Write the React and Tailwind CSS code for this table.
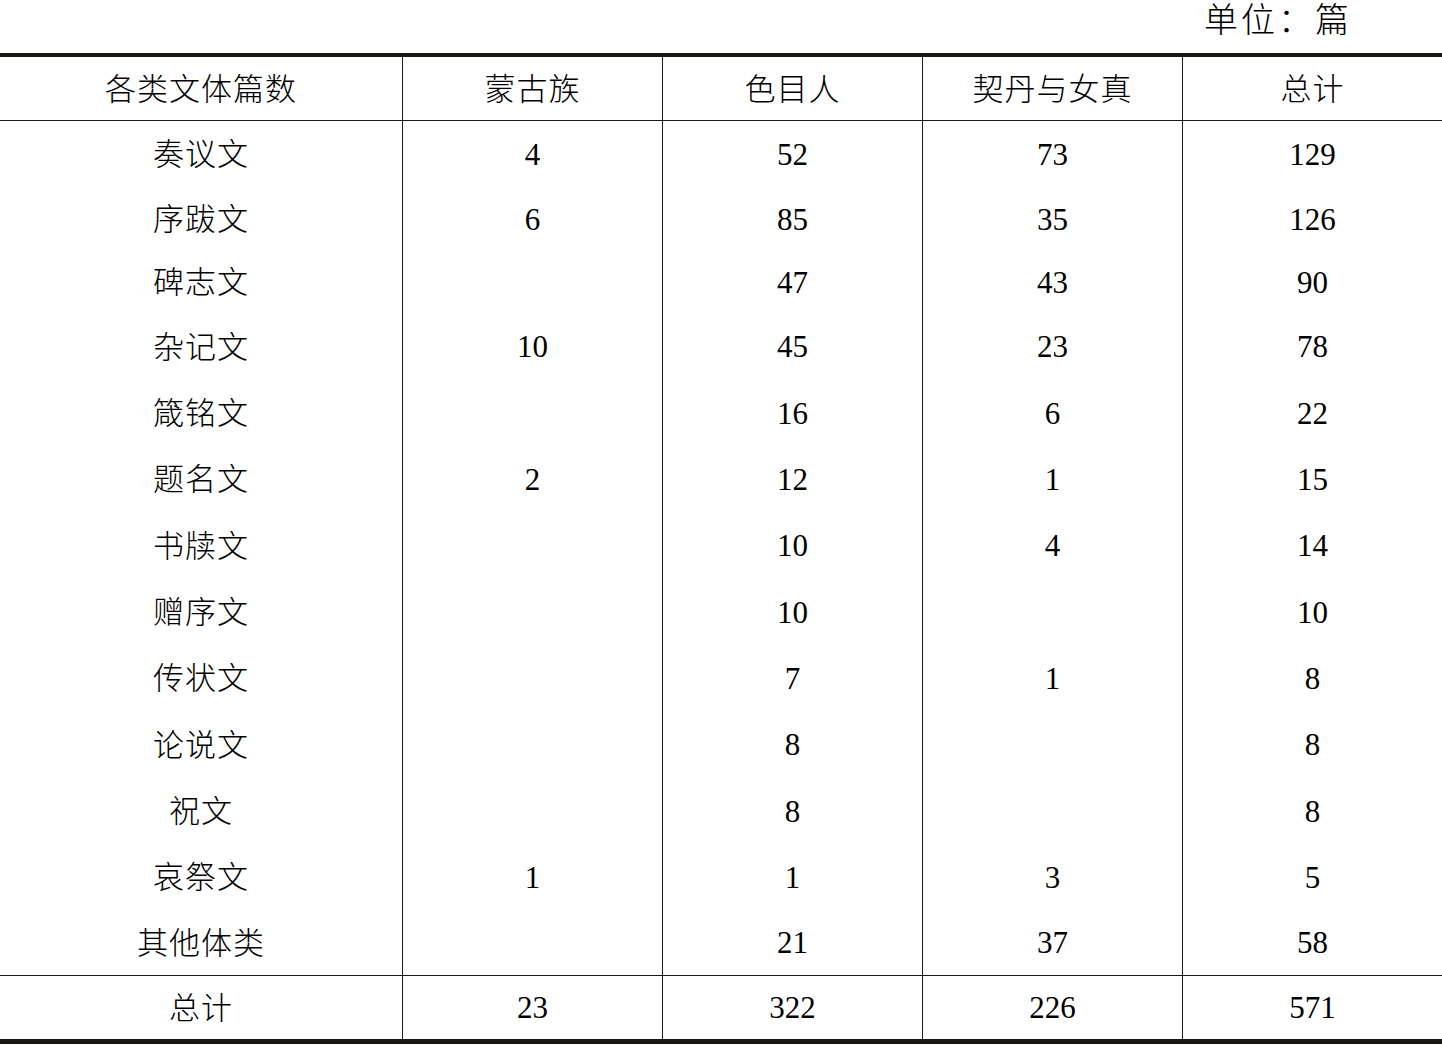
import React from "react";

const rows = [
  { name: "奏议文", v: ["4", "52", "73", "129"], h: "h-[66px]" },
  { name: "序跋文", v: ["6", "85", "35", "126"], h: "h-[64px]" },
  { name: "碑志文", v: ["", "47", "43", "90"], h: "h-[62px]" },
  { name: "杂记文", v: ["10", "45", "23", "78"], h: "h-[67px]" },
  { name: "箴铭文", v: ["", "16", "6", "22"], h: "h-[66px]" },
  { name: "题名文", v: ["2", "12", "1", "15"], h: "h-[66px]" },
  { name: "书牍文", v: ["", "10", "4", "14"], h: "h-[67px]" },
  { name: "赠序文", v: ["", "10", "", "10"], h: "h-[66px]" },
  { name: "传状文", v: ["", "7", "1", "8"], h: "h-[66px]" },
  { name: "论说文", v: ["", "8", "", "8"], h: "h-[67px]" },
  { name: "祝文", v: ["", "8", "", "8"], h: "h-[66px]" },
  { name: "哀祭文", v: ["1", "1", "3", "5"], h: "h-[66px]" },
  { name: "其他体类", v: ["", "21", "37", "58"], h: "h-[65px]" },
];

function Row({ cells, className }) {
  return (
    <div className={"grid grid-cols-[402px_260px_260px_260px_260px] " + className}>
      {cells.map((c, i) => {
        const num = /^[0-9]+$/.test(c);
        return (
          <div
            key={i}
            className={
              "flex items-center justify-center leading-none " +
              (i > 0 ? "border-l border-[#1a1a1a] " : "")
            }
          >
            {num ? (
              <span className="font-['Liberation_Serif','Times_New_Roman',serif] text-[31px]">{c}</span>
            ) : (
              <span className="font-['Noto_Sans_CJK_SC',sans-serif] font-light text-[31px] tracking-[1px] mb-[5px]">
                {c}
              </span>
            )}
          </div>
        );
      })}
    </div>
  );
}

export default function App() {
  return (
    <div className="w-[1442px] h-[1045px] bg-white text-black overflow-hidden">
      <div className="h-[53px] flex justify-end items-start pr-[90px]">
        <span className="font-['Noto_Sans_CJK_SC',sans-serif] font-light text-[34px] leading-[36px] tracking-[3px]">
          单位：篇
        </span>
      </div>
      <div className="border-t-[4px] border-b-[5px] border-[#1a1612]">
        <Row
          className="h-[64px] border-b border-[#1a1a1a]"
          cells={["各类文体篇数", "蒙古族", "色目人", "契丹与女真", "总计"]}
        />
        {rows.map((r) => (
          <Row key={r.name} className={r.h} cells={[r.name, ...r.v]} />
        ))}
        <Row
          className="h-[64px] border-t border-[#1a1a1a]"
          cells={["总计", "23", "322", "226", "571"]}
        />
      </div>
    </div>
  );
}
